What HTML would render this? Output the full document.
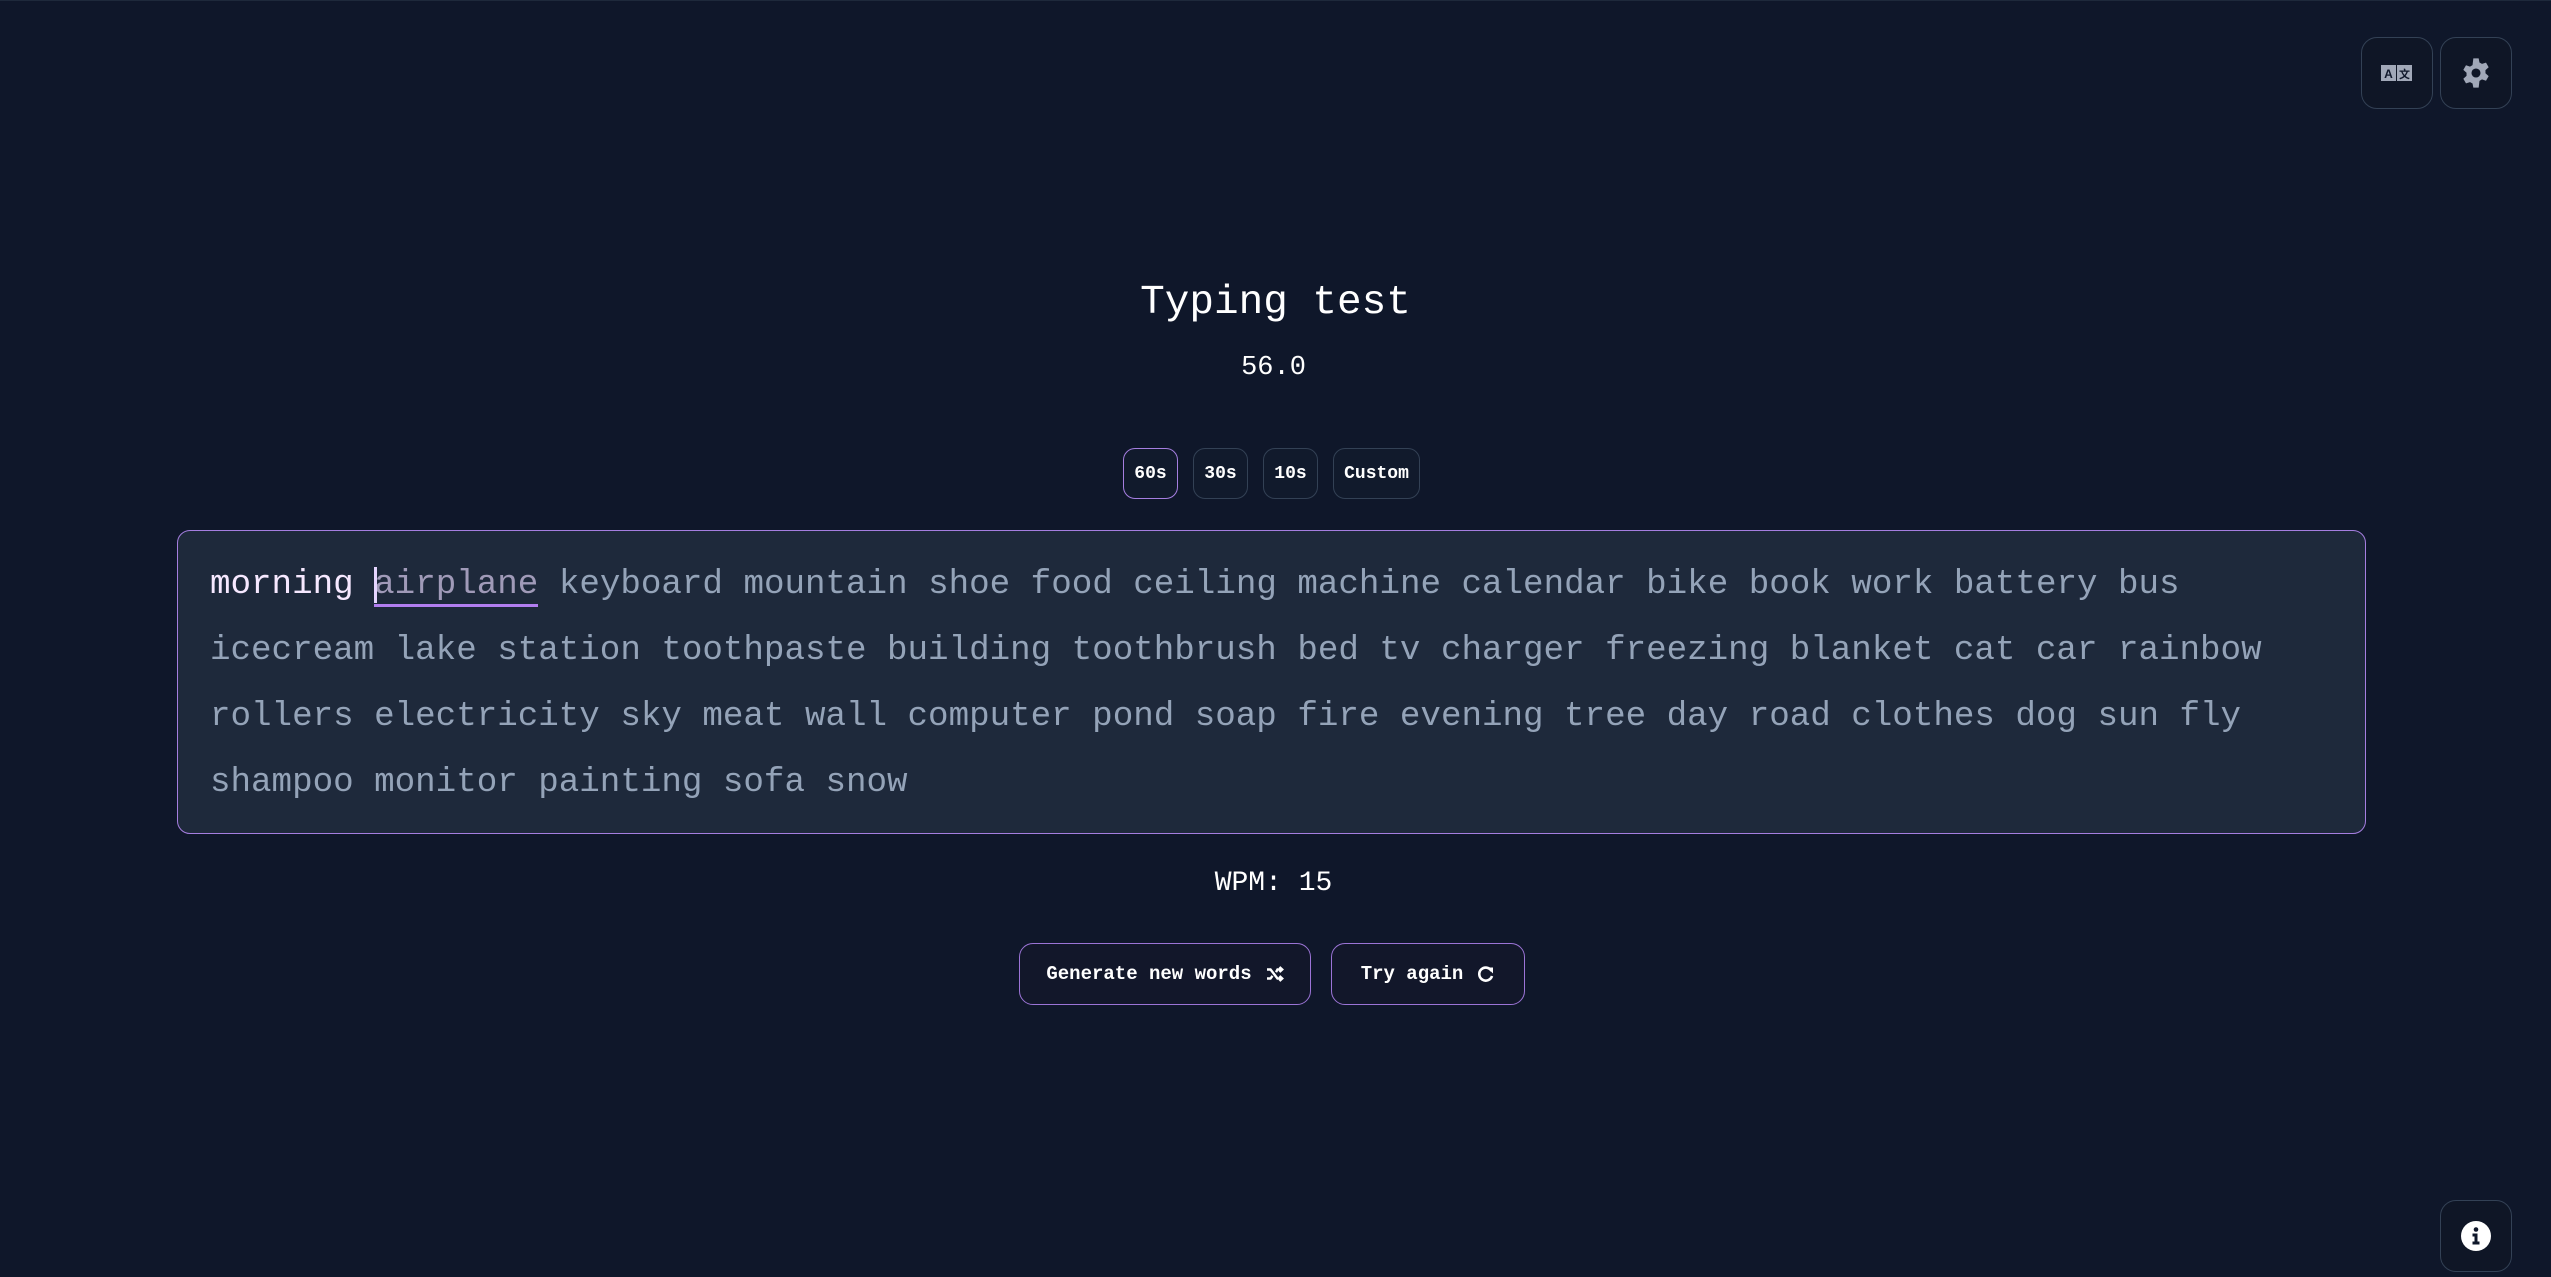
<!DOCTYPE html>
<html><head><meta charset="utf-8"><style>
*{margin:0;padding:0;box-sizing:border-box}
html,body{width:2551px;height:1277px;background:#0f172a;overflow:hidden;font-family:"Liberation Mono","DejaVu Sans Mono",monospace;color:#fff}
body{position:relative;border-top:1px solid #1e293b}
.abs{position:absolute}
.ib{position:absolute;width:72px;height:72px;border:1.5px solid #334155;border-radius:16px;background:#0f1626;display:flex;align-items:center;justify-content:center}
.t{position:absolute;left:0;width:2551px;text-align:center;white-space:pre}
.tb{position:absolute;top:447px;height:51px;border:1.5px solid #334155;border-radius:12px;background:#111a2c;font-weight:bold;font-size:18px;display:flex;align-items:center;justify-content:center}
.box{position:absolute;left:177px;top:529px;width:2189px;height:304px;background:#1e293b;border:1.5px solid #a57ee0;border-radius:13px;padding:21px 0 0 32px;font-size:34.2px;line-height:66px;color:#94a3b8;white-space:pre}
.typed{color:#f6e8ff}
.cur{position:relative;border-bottom:3px solid #b27ef0;color:#a09ab8}
.cur:before{content:"";position:absolute;left:0;top:1px;width:3px;height:36px;background:#e5d5ff}
.bb{position:absolute;top:942px;height:62px;border:1.5px solid #9b74d6;border-radius:14px;background:#12172a;font-weight:bold;font-size:19px;display:flex;align-items:center;justify-content:center;gap:14px}
</style></head><body>
<div class="ib" style="left:2361px;top:36px">
<svg width="32" height="20" viewBox="0 0 32 20"><rect x="0" y="2" width="15" height="16" fill="#a1a8b8"/><rect x="16" y="2" width="15" height="16" fill="#a1a8b8"/><text x="7.5" y="15" font-size="12" font-weight="bold" text-anchor="middle" fill="#0f172a" font-family="Liberation Sans">A</text><text x="23.5" y="15" font-size="11" font-weight="bold" text-anchor="middle" fill="#0f172a" font-family="Noto Sans CJK SC">文</text></svg></div>
<div class="ib" style="left:2440px;top:36px">
<svg width="32" height="32" viewBox="0 0 24 24"><path fill="#a1a8b8" fill-rule="evenodd" d="M10 1h4l.6 3.1 1.9 1.1 3-1 2 3.5-2.4 2.1v2.4l2.4 2.1-2 3.5-3-1-1.9 1.1L14 23h-4l-.6-3.1-1.9-1.1-3 1-2-3.5 2.4-2.1v-2.4L2.5 9.7l2-3.5 3 1 1.9-1.1zM12 8.6a3.4 3.4 0 1 0 0 6.8 3.4 3.4 0 0 0 0-6.8z"/></svg></div>
<div class="ib" style="left:2440px;top:1199px">
<svg width="32" height="32" viewBox="0 0 32 32"><circle cx="16" cy="16" r="15" fill="#fff"/><circle cx="16" cy="9.5" r="2.3" fill="#0f172a"/><path d="M12.5 13.5h5v8h2v3h-7v-3h2v-5h-2z" fill="#0f172a"/></svg></div>

<div class="t" style="top:274px;font-size:41px;line-height:56px">Typing test</div>
<div class="t" style="top:349px;font-size:27px;line-height:36px;padding-right:4px">56.0</div>

<div class="tb" style="left:1123px;width:55px;border-color:#a57ee0">60s</div>
<div class="tb" style="left:1193px;width:55px">30s</div>
<div class="tb" style="left:1263px;width:55px">10s</div>
<div class="tb" style="left:1333px;width:87px">Custom</div>

<div class="box"><span class="typed">morning</span> <span class="cur">airplane</span> keyboard mountain shoe food ceiling machine calendar bike book work battery bus
icecream lake station toothpaste building toothbrush bed tv charger freezing blanket cat car rainbow
rollers electricity sky meat wall computer pond soap fire evening tree day road clothes dog sun fly
shampoo monitor painting sofa snow</div>

<div class="t" style="top:865px;font-size:28px;line-height:36px;padding-right:4px">WPM: 15</div>

<div class="bb" style="left:1019px;width:292px">Generate new words
<svg width="18" height="16" viewBox="0 0 18 16"><path d="M1 3.5h3.5l7 9H16M1 12.5h3.5l2-2.6M10 6.1l1.5-2.6H16M13.5 1l2.7 2.5-2.7 2.5M13.5 10l2.7 2.5-2.7 2.5" fill="none" stroke="#fff" stroke-width="2.4"/></svg></div>
<div class="bb" style="left:1331px;width:194px">Try again
<svg width="18" height="18" viewBox="0 0 18 18"><path d="M14.5 6A6.5 6.5 0 1 0 15 11" fill="none" stroke="#fff" stroke-width="2.6"/><path d="M10 2.5h6v6z" fill="#fff"/></svg></div>
</body></html>
